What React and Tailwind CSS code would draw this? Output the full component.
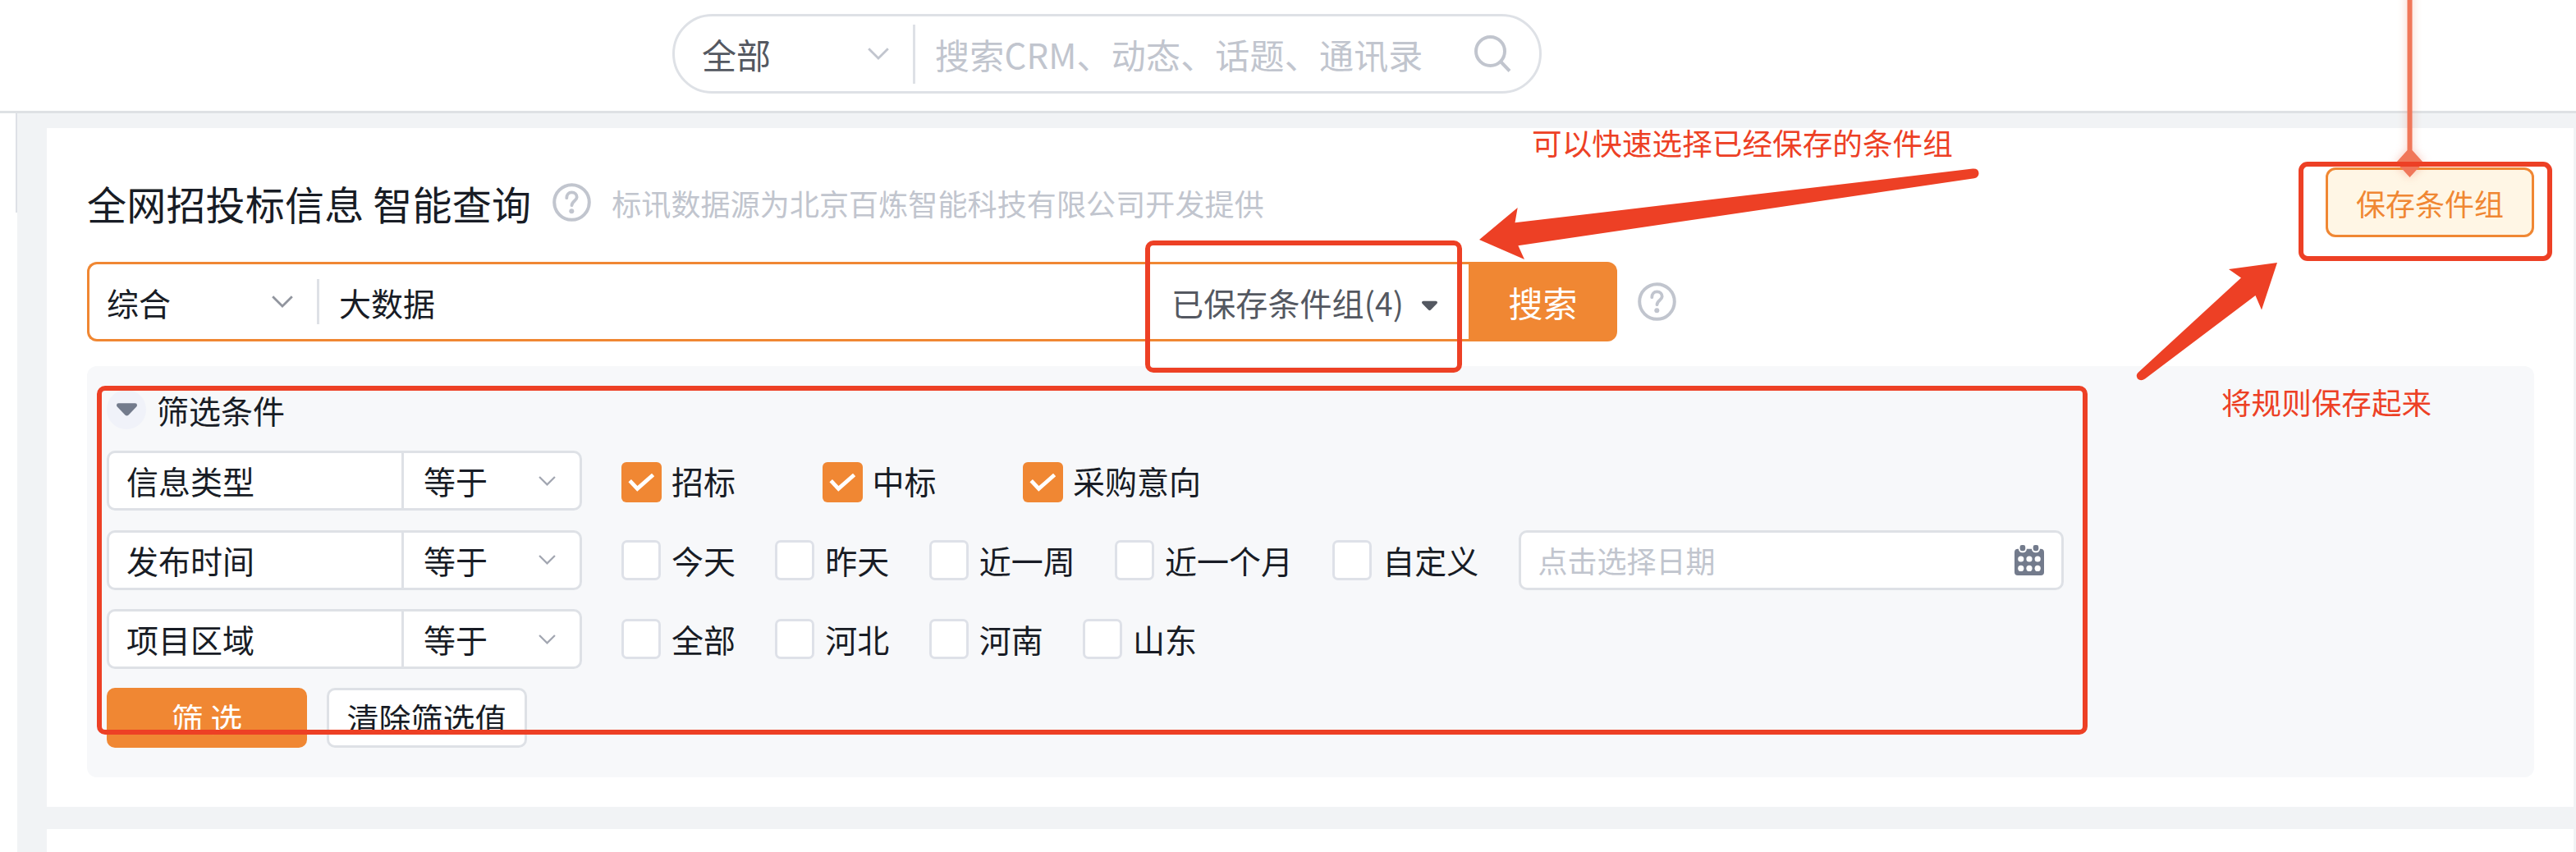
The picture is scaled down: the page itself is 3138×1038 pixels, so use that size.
const filters = [
  {
    field: "信息类型",
    itemClass: "w-[244.5px]",
    options: ["招标", "中标", "采购意向"],
    checked: true,
  },
  {
    field: "发布时间",
    itemClass: "mr-[48.3px]",
    options: ["今天", "昨天", "近一周", "近一个月", "自定义"],
    date: true,
  },
  {
    field: "项目区域",
    itemClass: "mr-[48.3px]",
    options: ["全部", "河北", "河南", "山东"],
  },
];

function Chevron({ className }) {
  return (
    <svg viewBox="0 0 26 15" fill="none" stroke="currentColor" className={className}>
      <path d="M1.2 1.2 13 13 24.8 1.2" strokeWidth="2.8" />
    </svg>
  );
}

function Caret({ className }) {
  return (
    <svg viewBox="0 0 26 16" fill="currentColor" className={className}>
      <path d="M2.500 0H23.500Q26 0 26 2.500Q26 3.500 25 4.500L15 15Q13 16.600 11 15L1 4.500Q0 3.500 0 2.500Q0 0 2.500 0Z" />
    </svg>
  );
}

function HelpIcon() {
  return (
    <svg viewBox="0 0 47 47" fill="none" className="h-[47px] w-[47px] shrink-0 text-[#c1c5ce]">
      <circle cx="23.5" cy="23.5" r="21.3" stroke="currentColor" strokeWidth="4" />
      <path
        d="M17.3 18.2C17.3 14 19.8 11.4 23.5 11.4C27.2 11.400 29.700 13.900 29.700 17.300C29.700 21.600 23.500 22 23.500 27.200"
        stroke="currentColor"
        strokeWidth="3.8"
        strokeLinecap="round"
      />
      <circle cx="23.3" cy="34.2" r="3" fill="currentColor" />
    </svg>
  );
}

function CalendarIcon() {
  return (
    <svg viewBox="0 0 36 37" className="h-[37px] w-9">
      <rect x="0" y="4.7" width="36" height="32.3" rx="4" fill="#737b8c" />
      <rect x="4.9" y="-3" width="10" height="12.2" rx="4.5" fill="#fff" />
      <rect x="21" y="-3" width="10" height="12.2" rx="4.5" fill="#fff" />
      <rect x="6.6" y="0" width="6.6" height="7.2" rx="2.4" fill="#737b8c" />
      <rect x="22.7" y="0" width="6.6" height="7.2" rx="2.4" fill="#737b8c" />
      {[17, 28.4].map((cy) =>
        [7.8, 18, 28.2].map((cx) => <circle key={`${cx}-${cy}`} cx={cx} cy={cy} r="3.6" fill="#fff" />)
      )}
    </svg>
  );
}

function Checkbox({ label, checked, className }) {
  return (
    <label className={`flex shrink-0 items-center ${className}`}>
      {checked ? (
        <span className="mt-[3px] mr-3 h-[49px] w-[49px] rounded-[6px] bg-[#f08733]">
          <svg viewBox="0 0 49 49" fill="none" className="h-[49px] w-[49px]">
            <path d="M10.2 22.600L19.400 32.400L38.600 15.500" stroke="#fff" strokeWidth="4.8" />
          </svg>
        </span>
      ) : (
        <span className="mr-[13px] h-[49px] w-12 rounded-[7px] border-3 border-[#dee1e8] bg-white" />
      )}
      <span>{label}</span>
    </label>
  );
}

function FilterRow({ filter }) {
  return (
    <div className="flex h-[73px] items-center">
      <div className="flex h-full w-[579px] shrink-0 rounded-[10px] border-3 border-[#dee1e6] bg-white">
        <div className="flex w-[359px] items-center border-r-3 border-[#dee1e6] pl-[21px]">{filter.field}</div>
        <div className="flex flex-1 items-center justify-between pl-6 pr-[29px]">
          <span>等于</span>
          <Chevron className="h-3 w-[21px] text-[#a2a6b1]" />
        </div>
      </div>
      <div className="ml-12 flex items-center">
        {filter.options.map((option) => (
          <Checkbox key={option} label={option} checked={filter.checked} className={filter.itemClass} />
        ))}
      </div>
      {filter.date && (
        <div className="flex h-full w-[664px] shrink-0 items-center justify-between rounded-[10px] border-3 border-[#dee1e6] bg-white pl-[21px] pr-[21px] text-4xl text-[#c1c5ce]">
          <span>点击选择日期</span>
          <CalendarIcon />
        </div>
      )}
    </div>
  );
}

function Header() {
  return (
    <header className="flex h-[138px] shrink-0 items-start border-b-3 border-[#dee1e4] bg-white pt-[17px]">
      <div className="ml-[819px] flex h-[97px] w-[1059px] items-center rounded-full border-3 border-[#dee1e6] text-[42px]">
        <div className="flex w-[290px] items-center pl-[33px] text-[#545861]">
          <span className="w-[202px]">全部</span>
          <Chevron className="h-[15px] w-[26px] text-[#c1c5ce]" />
        </div>
        <div className="h-[72px] w-[3px] bg-[#dee1e6]" />
        <span className="w-[681px] pl-6 tracking-[0.2px] whitespace-nowrap text-[#c1c5ce]">
          搜索CRM、动态、话题、通讯录
        </span>
        <svg viewBox="0 0 45 45" fill="none" stroke="#c1c5ce" strokeWidth="4" className="h-[45px] w-[45px] shrink-0">
          <circle cx="19.5" cy="19.5" r="17.5" />
          <path d="M32 32 43 43.5" />
        </svg>
      </div>
    </header>
  );
}

function SearchBar() {
  return (
    <div className="mt-[30px] flex h-[97px] items-center">
      <div className="flex h-full w-[1683px] items-center rounded-l-[12px] border-3 border-r-0 border-[#f08733] bg-white">
        <div className="flex w-[277px] items-center pl-[21px]">
          <span className="w-[201px] pt-0.5">综合</span>
          <Chevron className="h-[15px] w-[26px] text-[#91959e]" />
        </div>
        <div className="h-[55px] w-[3px] bg-[#dee1e6]" />
        <span className="flex-1 pt-0.5 pl-6">大数据</span>
        <span className="pt-0.5 tracking-[0.1px] text-[#545861]">已保存条件组(4)</span>
        <Caret className="mt-[10px] mr-[38px] ml-[22px] h-[13px] w-[19px] text-[#545861]" />
      </div>
      <button className="h-full w-[181px] rounded-r-[12px] bg-[#f08733] text-[42px] text-white">搜索</button>
      <div className="ml-[25px]">
        <HelpIcon />
      </div>
    </div>
  );
}

function FilterPanel() {
  return (
    <div className="mt-[30px] h-[501px] rounded-[12px] bg-[#f7f8fa] pl-6 pt-[30px]">
      <div className="flex h-[46px] items-center">
        <span className="mr-[13px] flex h-12 w-12 items-center justify-center rounded-full bg-[#f0f2f9]">
          <Caret className="h-4 w-[25px] text-[#737b8c]" />
        </span>
        <span>筛选条件</span>
      </div>
      <div className="mt-[27px] flex flex-col gap-[23.5px]">
        {filters.map((filter) => (
          <FilterRow key={filter.field} filter={filter} />
        ))}
      </div>
      <div className="mt-[23px] flex gap-6">
        <button className="h-[73px] w-[244px] rounded-[10px] bg-[#f08733] text-white">筛 选</button>
        <button className="h-[73px] w-[244px] rounded-[10px] border-3 border-[#dee1e6] bg-white">清除筛选值</button>
      </div>
    </div>
  );
}

function Annotations() {
  return (
    <div className="pointer-events-none absolute inset-0 text-[36.6px] leading-[54px] whitespace-nowrap text-[#ed4025]">
      <svg viewBox="0 0 3138 1038" className="absolute inset-0 h-[1038px] w-[3138px]">
        <g className="drop-shadow-[0_0_6px_rgba(238,117,87,0.4)]">
          <path d="M2932.5 -10H2938.5V183L2952 198L2935.5 216L2919 198L2932.5 183Z" fill="#f0775a" />
        </g>
        <path
          d="M1802 292L1848.7 253L1845.5 271.3L2403 205.6Q2410 205 2410.5 211Q2410.5 216 2405 217.3L1849.4 299.3L1857 316Z"
          fill="#ed4025"
        />
        <path
          d="M2774 320L2755 377.5L2747.5 360L2613 461.5Q2608 465 2604 461.5Q2601 457 2605 453.5L2730 338.5L2715 328Z"
          fill="#ed4025"
        />
      </svg>
      <div className="absolute top-[293px] left-[1395px] h-[161px] w-[386px] rounded-[10px] border-6 border-[#ed4025]" />
      <div className="absolute top-[470px] left-[118px] h-[425px] w-[2425px] rounded-[10px] border-6 border-[#ed4025]" />
      <div className="absolute top-[197px] left-[2800px] h-[121px] w-[309px] rounded-[11px] border-6 border-[#ed4025]" />
      <span className="absolute top-[147px] left-[1866px] tracking-[0.05px]">可以快速选择已经保存的条件组</span>
      <span className="absolute top-[463px] left-[2706px]">将规则保存起来</span>
    </div>
  );
}

export default function App() {
  return (
    <div className="relative flex h-[1038px] w-[3138px] flex-col overflow-hidden bg-[#f1f3f5] font-['Noto_Sans_CJK_SC',sans-serif] text-[39px] leading-none text-[#181c25]">
      <Header />
      <div className="flex flex-1">
        <aside className="w-[21px] shrink-0 bg-white">
          <div className="h-[121px] border-r-2 border-[#dee1e6]" />
        </aside>
        <main className="ml-9 mr-[3px] flex flex-1 flex-col pt-[18px]">
          <section className="h-[827px] shrink-0 bg-white pl-[49px] pr-12 pt-12">
            <div className="flex h-[85px] items-center">
              <h1 className="text-5xl leading-none tracking-[0.2px]">全网招投标信息 智能查询</h1>
              <div className="ml-[26px]">
                <HelpIcon />
              </div>
              <span className="ml-[25px] text-4xl leading-none tracking-[0.12px] text-[#c1c5ce]">
                标讯数据源为北京百炼智能科技有限公司开发提供
              </span>
              <button className="ml-auto h-[85px] w-[254px] rounded-[12px] border-3 border-[#f08733] bg-[#fff6e5] text-4xl text-[#f08733]">
                保存条件组
              </button>
            </div>
            <SearchBar />
            <FilterPanel />
          </section>
          <section className="mt-[27px] flex-1 bg-white" />
        </main>
      </div>
      <Annotations />
    </div>
  );
}
